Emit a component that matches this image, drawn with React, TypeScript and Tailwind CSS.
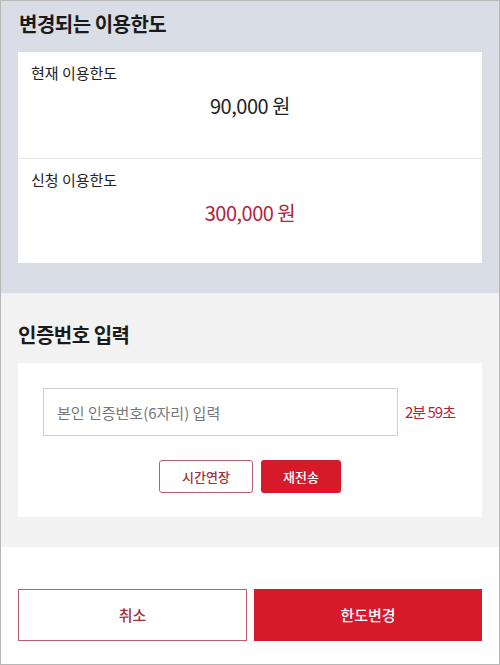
import { useState } from "react"

const FONT = { fontFamily: '"Noto Sans CJK KR", "Noto Sans", sans-serif' }

function LimitRow({ label, value, red, top }: { label: string; value: string; red?: boolean; top?: boolean }) {
  return (
    <div className={`flex flex-col px-[13px] pt-[10px] ${top ? "pb-[38px] border-b border-[#e6e6e6]" : "pb-[36px]"}`}>
      <div className="text-[15px] leading-[22px] text-[#222]">{label}</div>
      <div className={`mt-[8px] text-center text-[20px] leading-[28px] tracking-[-0.5px] ${red ? "text-[#b3233b]" : "text-[#222]"}`}>
        {value}
      </div>
    </div>
  )
}

export default function App() {
  const [code, setCode] = useState("")

  return (
    <div style={FONT} className="w-[500px] h-[665px] border border-[#b8b8b8] flex flex-col bg-white overflow-hidden">
      {/* 변경되는 이용한도 */}
      <section className="bg-[#d9dee6] px-[17px] pt-[9px] pb-[30px]">
        <h2 className="pl-[1px] text-[20px] leading-[28px] font-bold text-[#1a1a1a] tracking-[-0.5px] mb-[14px]">변경되는 이용한도</h2>
        <div className="bg-white">
          <LimitRow label="현재 이용한도" value="90,000 원" top />
          <LimitRow label="신청 이용한도" value="300,000 원" red />
        </div>
      </section>

      {/* 인증번호 입력 */}
      <section className="bg-[#f2f2f2] px-[17px] pt-[28px] pb-[30px]">
        <h2 className="text-[20px] leading-[28px] font-bold text-[#1a1a1a] tracking-[-0.5px] mb-[14px]">인증번호 입력</h2>
        <div className="bg-white pl-[25px] pr-[10px] pt-[25px] pb-[24px]">
          <div className="flex items-center gap-[7px]">
            <input
              value={code}
              onChange={(e) => setCode(e.target.value)}
              placeholder="본인 인증번호(6자리) 입력"
              className="w-[355px] shrink-0 h-[48px] border border-[#d0d0d0] px-[13px] text-[15px] text-[#222] placeholder:text-[#777] outline-none"
            />
            <span className="whitespace-nowrap text-[15px] text-[#b3233b] tracking-[-1px]">2분 59초</span>
          </div>
          <div className="flex justify-center gap-[8px] mt-[24px] pr-[15px]">
            <button type="button" className="w-[94px] h-[33px] rounded-[3px] border border-[#b8606d] bg-white text-[13px] font-medium text-[#a3303f]">
              시간연장
            </button>
            <button type="button" className="w-[80px] h-[33px] rounded-[3px] bg-[#d71a2a] text-[13px] font-medium text-white">
              재전송
            </button>
          </div>
        </div>
      </section>

      {/* 하단 버튼 */}
      <div className="flex-1 flex gap-[7px] px-[17px] pt-[42px]">
        <button type="button" className="w-[229px] h-[52px] border border-[#b8606d] bg-white text-[15px] font-medium text-[#a3303f]">
          취소
        </button>
        <button type="button" className="w-[228px] h-[52px] bg-[#d71a2a] text-[15px] font-medium text-white">
          한도변경
        </button>
      </div>
    </div>
  )
}
